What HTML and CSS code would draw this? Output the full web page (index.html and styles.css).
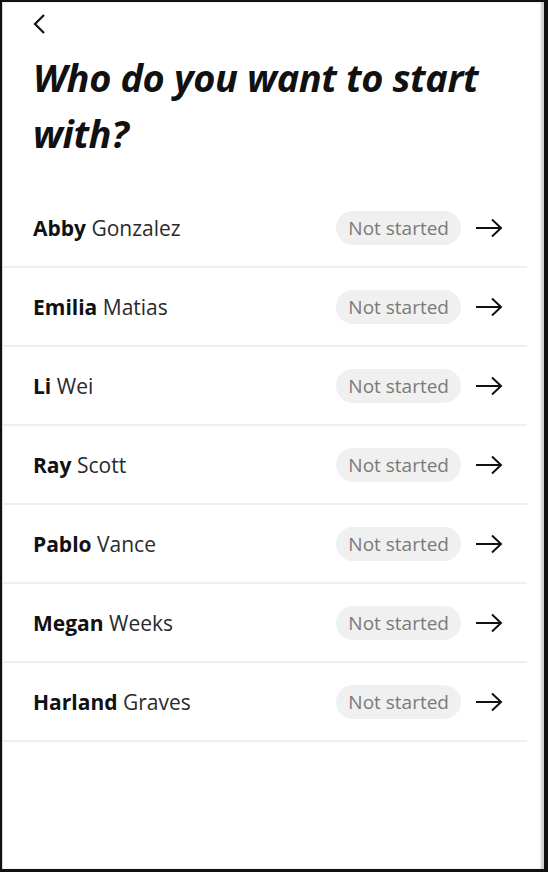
FILE: index.html
```html
<!DOCTYPE html>
<html lang="en">
<head>
<meta charset="utf-8">
<title>Who do you want to start with?</title>
<link rel="stylesheet" href="styles.css">
</head>
<body>
<div class="frame">
  <div class="screen">
    <header class="top">
      <button class="back" aria-label="Back">
        <svg width="14" height="22" viewBox="0 0 14 22"><path d="M11 2 L2 11 L11 20" fill="none" stroke="#111" stroke-width="2.2"/></svg>
      </button>
      <h1 class="title">Who do you want to start with?</h1>
    </header>
    <ul class="list">
      <li class="row"><span class="name"><b>Abby</b> Gonzalez</span><span class="pill">Not started</span><svg class="arrow" width="28" height="20" viewBox="0 0 28 20"><path d="M1 10 H26 M17 1.5 L26 10 L17 18.5" fill="none" stroke="#111" stroke-width="2"/></svg></li>
      <li class="row"><span class="name"><b>Emilia</b> Matias</span><span class="pill">Not started</span><svg class="arrow" width="28" height="20" viewBox="0 0 28 20"><path d="M1 10 H26 M17 1.5 L26 10 L17 18.5" fill="none" stroke="#111" stroke-width="2"/></svg></li>
      <li class="row"><span class="name"><b>Li</b> Wei</span><span class="pill">Not started</span><svg class="arrow" width="28" height="20" viewBox="0 0 28 20"><path d="M1 10 H26 M17 1.5 L26 10 L17 18.5" fill="none" stroke="#111" stroke-width="2"/></svg></li>
      <li class="row"><span class="name"><b>Ray</b> Scott</span><span class="pill">Not started</span><svg class="arrow" width="28" height="20" viewBox="0 0 28 20"><path d="M1 10 H26 M17 1.5 L26 10 L17 18.5" fill="none" stroke="#111" stroke-width="2"/></svg></li>
      <li class="row"><span class="name"><b>Pablo</b> Vance</span><span class="pill">Not started</span><svg class="arrow" width="28" height="20" viewBox="0 0 28 20"><path d="M1 10 H26 M17 1.5 L26 10 L17 18.5" fill="none" stroke="#111" stroke-width="2"/></svg></li>
      <li class="row"><span class="name"><b>Megan</b> Weeks</span><span class="pill">Not started</span><svg class="arrow" width="28" height="20" viewBox="0 0 28 20"><path d="M1 10 H26 M17 1.5 L26 10 L17 18.5" fill="none" stroke="#111" stroke-width="2"/></svg></li>
      <li class="row"><span class="name"><b>Harland</b> Graves</span><span class="pill">Not started</span><svg class="arrow" width="28" height="20" viewBox="0 0 28 20"><path d="M1 10 H26 M17 1.5 L26 10 L17 18.5" fill="none" stroke="#111" stroke-width="2"/></svg></li>
    </ul>
  </div>
</div>
</body>
</html>
```
FILE: styles.css
```css
* { box-sizing: border-box; }
html, body { margin: 0; padding: 0; background: #fff; }
body {
  font-family: "Open Sans", "Noto Sans", sans-serif;
  color: #111;
}
.frame {
  width: 548px;
  height: 872px;
  border-style: solid;
  border-color: #111;
  border-width: 2px 4px 3px 2px;
  box-shadow: inset 1px 0 0 #d8d8d8, inset -3px 0 2px #cfcfcf;
  background: #fff;
  overflow: hidden;
}
.screen {
  width: 524px;
  margin-left: 1px;
}
.top {
  padding: 11px 0 0 30px;
}
.back {
  display: block;
  border: 0;
  background: none;
  padding: 0;
  width: 14px;
  height: 22px;
  cursor: pointer;
}
.back svg { display: block; }
.title {
  margin: 14px 0 0;
  font-size: 38px;
  line-height: 56px;
  font-weight: 700;
  font-style: italic;
  letter-spacing: -0.4px;
  color: #111;
  max-width: 480px;
}
.list {
  list-style: none;
  margin: 28px 0 0;
  padding: 0;
}
.row {
  display: flex;
  align-items: center;
  height: 79px;
  padding: 0 24px 0 30px;
  border-bottom: 2px solid #efefef;
}
.name {
  flex: 1;
  font-size: 21px;
  color: #2a2a2a;
}
.name b {
  font-weight: 700;
  color: #111;
}
.pill {
  display: inline-flex;
  align-items: center;
  height: 34px;
  padding: 0 12px;
  border-radius: 17px;
  background: #f0f0f0;
  color: #7a7a7a;
  font-size: 19px;
}
.arrow {
  display: block;
  margin-left: 14px;
}
```
